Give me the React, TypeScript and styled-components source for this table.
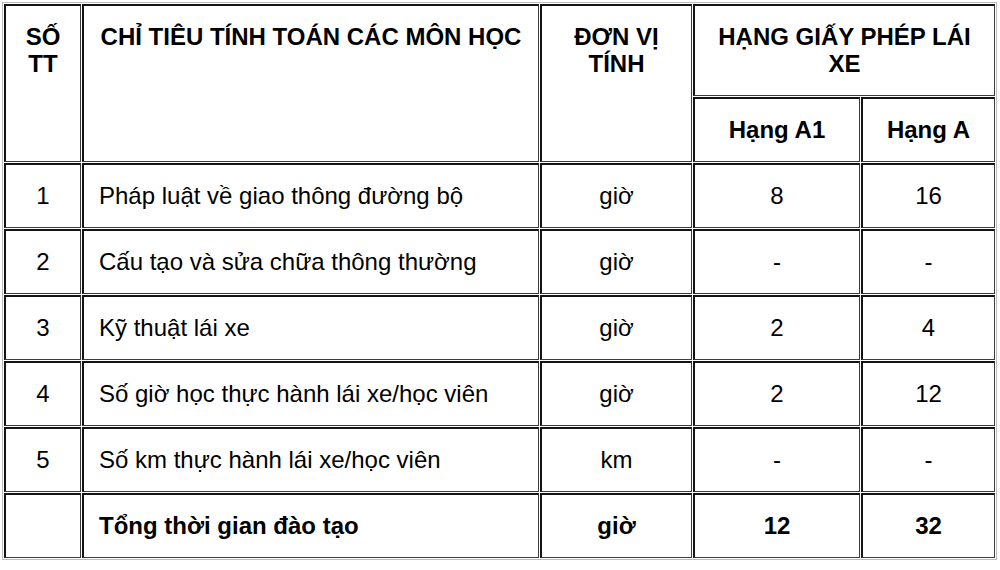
import React from 'react';
import styled, { createGlobalStyle } from 'styled-components';

const GlobalStyle = createGlobalStyle`
  html, body {
    margin: 0;
    padding: 0;
    background: #fff;
  }
  body {
    font-family: "Liberation Sans", Arial, Helvetica, sans-serif;
    color: #000;
  }
`;

const Page = styled.div`
  padding: 2px 3px 0 2px;
`;

const Table = styled.table`
  width: 995px;
  table-layout: fixed;
  border-collapse: separate;
  border-spacing: 1px;
  border: 1px solid #bcbcbc;
  font-size: 24px;
  line-height: 27px;
`;

type Align = 'left' | 'center';

// inset-looking cell edge: heavy dark top/left, thinner right/bottom
const cellBorder = `
  border-style: solid;
  border-width: 2px 1px 1px 2px;
  border-color: #141414 #3c3c3c #3c3c3c #141414;
`;

const HeadCell = styled.th<{ $valign?: 'top' | 'middle' }>`
  box-sizing: border-box;
  padding: 17px 12px 18px;
  text-align: center;
  vertical-align: ${p => p.$valign ?? 'top'};
  font-weight: 700;
  ${cellBorder}
`;

const Cell = styled.td<{ $align?: Align; $bold?: boolean }>`
  box-sizing: border-box;
  height: 65px;
  padding: 17px 15px 18px;
  text-align: ${p => p.$align ?? 'center'};
  vertical-align: middle;
  font-weight: ${p => (p.$bold ? 700 : 400)};
  ${cellBorder}
  white-space: nowrap;
`;

type Row = {
  no: string;
  name: string;
  unit: string;
  a1: string;
  a: string;
  total?: boolean;
};

const rows: Row[] = [
  { no: '1', name: 'Pháp luật về giao thông đường bộ', unit: 'giờ', a1: '8', a: '16' },
  { no: '2', name: 'Cấu tạo và sửa chữa thông thường', unit: 'giờ', a1: '-', a: '-' },
  { no: '3', name: 'Kỹ thuật lái xe', unit: 'giờ', a1: '2', a: '4' },
  { no: '4', name: 'Số giờ học thực hành lái xe/học viên', unit: 'giờ', a1: '2', a: '12' },
  { no: '5', name: 'Số km thực hành lái xe/học viên', unit: 'km', a1: '-', a: '-' },
  { no: '', name: 'Tổng thời gian đào tạo', unit: 'giờ', a1: '12', a: '32', total: true },
];

const App = () => {
  return (
    <Page>
      <GlobalStyle />
      <Table>
        <colgroup>
          <col style={{ width: 77 }} />
          <col style={{ width: 457 }} />
          <col style={{ width: 152 }} />
          <col style={{ width: 167 }} />
          <col style={{ width: 134 }} />
        </colgroup>
        <thead>
          <tr>
            <HeadCell rowSpan={2}>SỐ TT</HeadCell>
            <HeadCell rowSpan={2}>CHỈ TIÊU TÍNH TOÁN CÁC MÔN HỌC</HeadCell>
            <HeadCell rowSpan={2}>ĐƠN VỊ TÍNH</HeadCell>
            <HeadCell colSpan={2} $valign="middle">HẠNG GIẤY PHÉP LÁI XE</HeadCell>
          </tr>
          <tr>
            <HeadCell $valign="middle">Hạng A1</HeadCell>
            <HeadCell $valign="middle">Hạng A</HeadCell>
          </tr>
        </thead>
        <tbody>
          {rows.map((r, i) => (
            <tr key={i}>
              <Cell>{r.no}</Cell>
              <Cell $align="left" $bold={r.total}>{r.name}</Cell>
              <Cell $bold={r.total}>{r.unit}</Cell>
              <Cell $bold={r.total}>{r.a1}</Cell>
              <Cell $bold={r.total}>{r.a}</Cell>
            </tr>
          ))}
        </tbody>
      </Table>
    </Page>
  );
};

export default App;
